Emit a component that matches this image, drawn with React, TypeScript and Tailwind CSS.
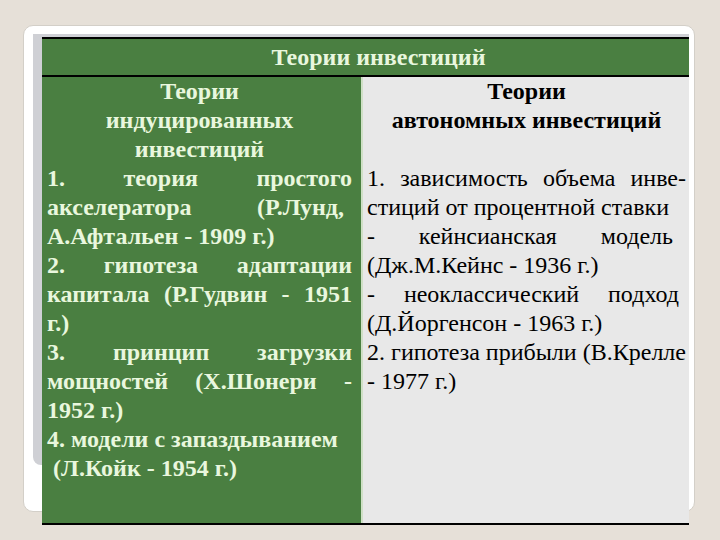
type Row = { text: string; align: 'center' | 'left' | 'justify'; bold?: boolean; pad?: string };

const leftRows: Row[] = [
  { text: 'Теории', align: 'center' },
  { text: 'индуцированных', align: 'center' },
  { text: 'инвестиций', align: 'center' },
  { text: '1. теория простого', align: 'justify' },
  { text: 'акселератора (Р.Лунд,', align: 'justify', pad: 'pr-[8px]' },
  { text: 'А.Афтальен - 1909 г.)', align: 'left' },
  { text: '2. гипотеза адаптации', align: 'justify' },
  { text: 'капитала (Р.Гудвин - 1951', align: 'justify' },
  { text: 'г.)', align: 'left' },
  { text: '3. принцип загрузки', align: 'justify' },
  { text: 'мощностей (Х.Шонери -', align: 'justify' },
  { text: '1952 г.)', align: 'left' },
  { text: '4. модели с запаздыванием', align: 'left' },
  { text: ' (Л.Койк - 1954 г.)', align: 'left' },
];

const rightRows: Row[] = [
  { text: 'Теории', align: 'center', bold: true },
  { text: 'автономных инвестиций', align: 'center', bold: true },
  { text: '', align: 'left' },
  { text: '1. зависимость объема инве-', align: 'justify' },
  { text: 'стиций от процентной ставки', align: 'left' },
  { text: '- кейнсианская модель', align: 'justify', pad: 'pr-[13px]' },
  { text: '(Дж.М.Кейнс - 1936 г.)', align: 'left' },
  { text: '- неоклассический подход', align: 'justify', pad: 'pr-[7px]' },
  { text: '(Д.Йоргенсон - 1963 г.)', align: 'left' },
  { text: '2. гипотеза прибыли (В.Крелле', align: 'justify' },
  { text: '- 1977 г.)', align: 'left' },
];

function Line({ row }: { row: Row }) {
  const weight = row.bold ? 'font-bold' : '';
  if (row.align === 'justify') {
    return (
      <div className={`flex justify-between h-[29px] leading-[29px] ${weight} ${row.pad ?? ''}`}>
        {row.text.split(' ').map((w, i) => (
          <span key={i}>{w}</span>
        ))}
      </div>
    );
  }
  return (
    <div
      className={`h-[29px] leading-[29px] whitespace-pre ${weight} ${
        row.align === 'center' ? 'text-center' : 'text-left'
      }`}
    >
      {row.text || '\u00a0'}
    </div>
  );
}

export default function App() {
  return (
    <div className="relative w-[720px] h-[540px] overflow-hidden bg-[#e6e0d8] pt-[37px] pl-[42px] font-['Liberation_Serif']">
      {/* slide card behind the table */}
      <div className="absolute left-[23px] top-[25px] w-[672px] h-[487px] rounded-[10px] bg-white border border-[#d3cfc8]" />
      <div className="absolute left-[33px] top-[34px] w-[656px] h-[431px] rounded-b-[8px] bg-[#cfd0d5]" />

      <div className="relative w-[647px] border-t-2 border-b-2 border-black">
        <div className="h-[38px] bg-[#4a7f41] border-b-2 border-black flex items-center justify-center pl-[26px] text-[#e9f7de] font-bold text-[24px]">
          Теории инвестиций
        </div>
        <div className="flex h-[446px]">
          <div className="w-[319px] bg-[#4a7f41] pl-[5px] pr-[9px] text-[#e9f7de] font-bold text-[24px]">
            {leftRows.map((r, i) => (
              <Line key={i} row={r} />
            ))}
          </div>
          <div className="w-[2px] bg-[#cfe0c6]" />
          <div className="flex-1 bg-[#e8e8e8] pl-[4px] pr-[3px] text-black text-[24px]">
            {rightRows.map((r, i) => (
              <Line key={i} row={r} />
            ))}
          </div>
        </div>
      </div>
    </div>
  );
}
